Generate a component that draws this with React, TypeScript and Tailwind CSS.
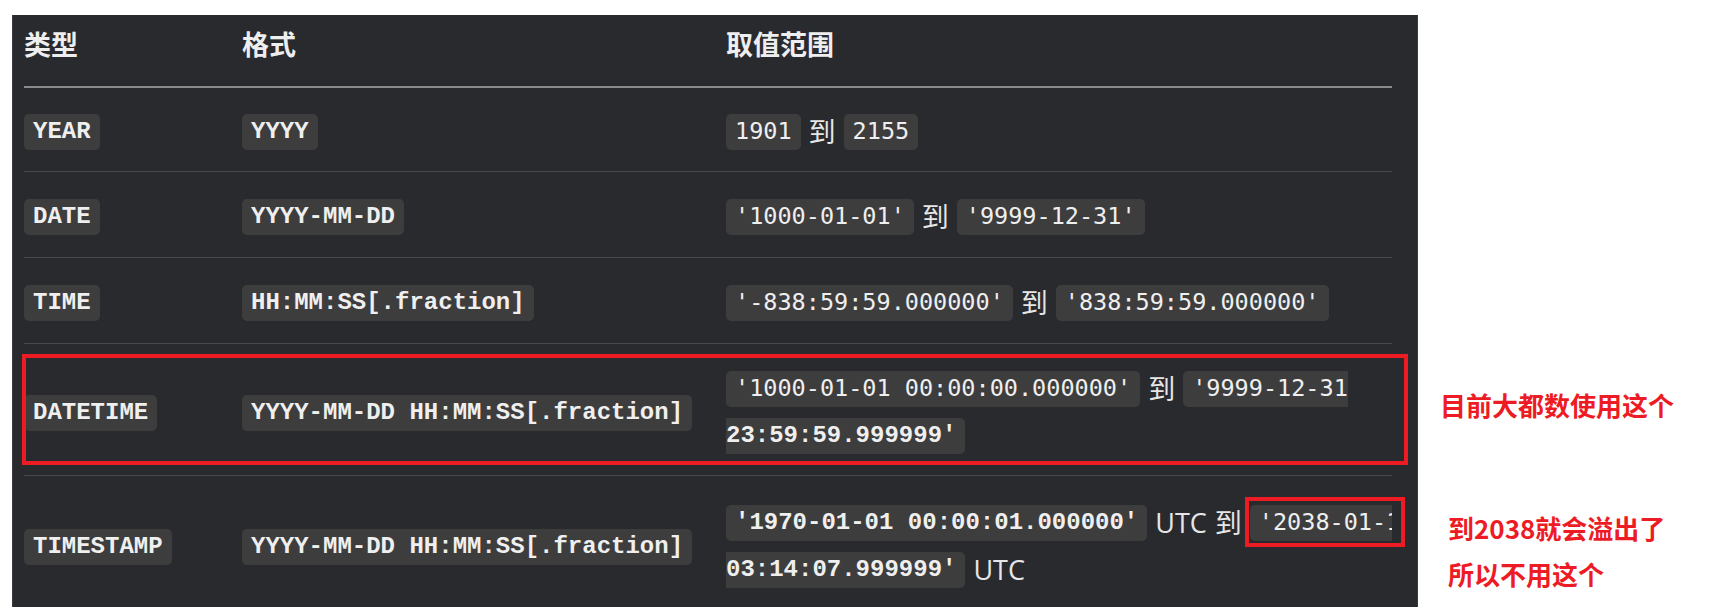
import type { ReactNode } from "react";
import clsx from "clsx";

// two monospace looks show up in the table: a bold courier and a dejavu mono
const courier =
  "font-['Courier_New','Nimbus_Mono_PS','FreeMono','Liberation_Mono',monospace] font-bold text-[24px]";
const dejavu = "font-['DejaVu_Sans_Mono',monospace] text-[23.5px]";

function Code({
  children,
  serif,
  className,
}: {
  children: ReactNode;
  serif?: boolean;
  className?: string;
}) {
  return (
    <code
      className={clsx(
        "inline-flex h-[36px] shrink-0 items-center whitespace-pre rounded-[5px] bg-[#3d3d3e] px-[9px] leading-none text-[#efefef]",
        serif ? courier : dejavu,
        className,
      )}
    >
      {children}
    </code>
  );
}

function Word({ children }: { children: ReactNode }) {
  return (
    <span className="shrink-0 font-['Open_Sans','Noto_Sans_CJK_SC',sans-serif] text-[27px] leading-[36px] text-[#e6e6e6]">
      {children}
    </span>
  );
}

function Line({ children, clip }: { children: ReactNode; clip?: boolean }) {
  return (
    <div className={clsx("flex h-[36px] items-center gap-[8px]", clip && "overflow-x-hidden")}>
      {children}
    </div>
  );
}

type RowProps = {
  type: string;
  format: string;
  range: ReactNode;
  className: string;
};

function Row({ type, format, range, className }: RowProps) {
  return (
    <div className={clsx("flex items-center", className)}>
      <div className="w-[218px] shrink-0">
        <Code serif>{type}</Code>
      </div>
      <div className="w-[484px] shrink-0">
        <Code serif>{format}</Code>
      </div>
      <div className="flex w-[666px] shrink-0 flex-col gap-[11px]">{range}</div>
    </div>
  );
}

export default function App() {
  return (
    <div className="flex h-[614px] w-[1710px] overflow-hidden bg-white pl-[12px] pt-[15px]">
      <div className="relative h-[592px] w-[1406px] shrink-0 border-x border-[#3b3c40] bg-[#292a2e] pl-[11px]">
        <div className="w-[1368px]">
          <div className="flex border-b-2 border-[#8b8b8b] pb-[25px] pt-[12px] font-['Noto_Sans_CJK_SC',sans-serif] text-[27px] font-bold leading-[34px] text-[#eeeeee]">
            <div className="w-[218px]">类型</div>
            <div className="w-[484px]">格式</div>
            <div>取值范围</div>
          </div>

          <Row
            type="YEAR"
            format="YYYY"
            className="border-b border-[#48494c] pb-[21px] pt-[26px]"
            range={
              <Line>
                <Code>1901</Code>
                <Word>到</Word>
                <Code>2155</Code>
              </Line>
            }
          />
          <Row
            type="DATE"
            format="YYYY-MM-DD"
            className="border-b border-[#48494c] pb-[22px] pt-[27px]"
            range={
              <Line>
                <Code>'1000-01-01'</Code>
                <Word>到</Word>
                <Code>'9999-12-31'</Code>
              </Line>
            }
          />
          <Row
            type="TIME"
            format="HH:MM:SS[.fraction]"
            className="border-b border-[#48494c] pb-[22px] pt-[27px]"
            range={
              <Line>
                <Code>'-838:59:59.000000'</Code>
                <Word>到</Word>
                <Code>'838:59:59.000000'</Code>
              </Line>
            }
          />
          <Row
            type="DATETIME"
            format="YYYY-MM-DD HH:MM:SS[.fraction]"
            className="border-b border-[#48494c] pb-[21px] pt-[27px]"
            range={
              <>
                <Line>
                  <Code>'1000-01-01 00:00:00.000000'</Code>
                  <Word>到</Word>
                  <Code className="rounded-r-none pr-0">'9999-12-31</Code>
                </Line>
                <Line>
                  <Code serif className="rounded-l-none pl-0">
                    23:59:59.999999'
                  </Code>
                </Line>
              </>
            }
          />
          <Row
            type="TIMESTAMP"
            format="YYYY-MM-DD HH:MM:SS[.fraction]"
            className="pb-[19px] pt-[29px]"
            range={
              <>
                <Line clip>
                  <Code serif>'1970-01-01 00:00:01.000000'</Code>
                  <Word>UTC</Word>
                  <Word>到</Word>
                  <Code>'2038-01-19</Code>
                </Line>
                <Line>
                  <Code serif className="rounded-l-none pl-0">
                    03:14:07.999999'
                  </Code>
                  <Word>UTC</Word>
                </Line>
              </>
            }
          />
        </div>

        {/* red markup boxes drawn over the table */}
        <div className="absolute left-[9px] top-[339px] h-[111px] w-[1386px] border-4 border-[#ed1c24]" />
        <div className="absolute left-[1232px] top-[482px] h-[50px] w-[160px] border-4 border-[#ed1c24]" />
      </div>

      <div className="flex flex-col pt-[373px] font-['Noto_Sans_CJK_SC',sans-serif] text-[26px] font-bold leading-[34px] text-[#ed1c24]">
        <div className="pl-[22px]">目前大都数使用这个</div>
        <div className="mt-[89px] pl-[30px]">到2038就会溢出了</div>
        <div className="mt-[12px] pl-[30px]">所以不用这个</div>
      </div>
    </div>
  );
}
